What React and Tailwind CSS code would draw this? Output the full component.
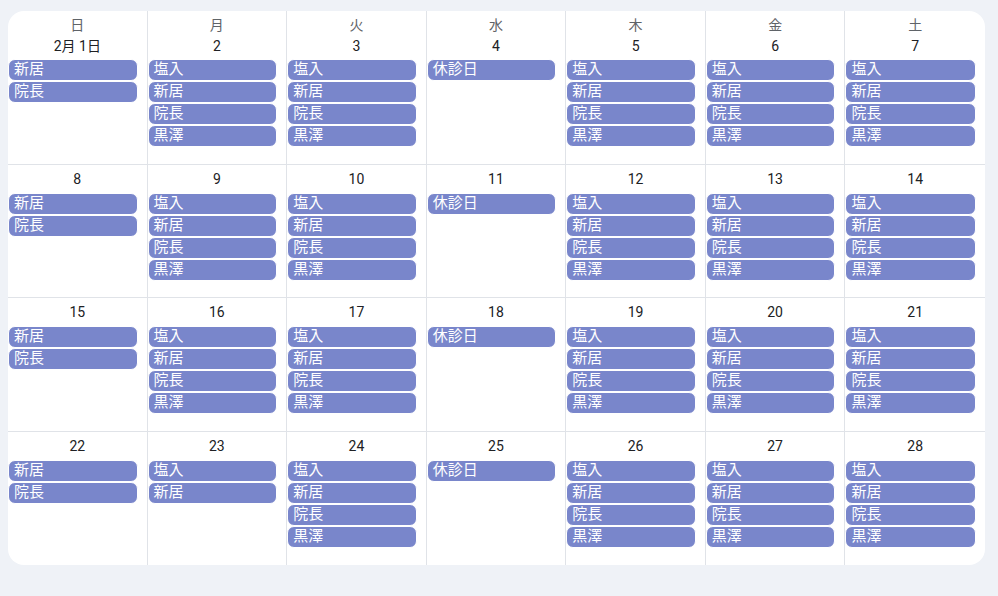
const weekdays = ["日", "月", "火", "水", "木", "金", "土"];

const full = ["塩入", "新居", "院長", "黒澤"];

function eventsFor(day) {
  const dow = (day - 1) % 7;
  if (dow === 0) return ["新居", "院長"];
  if (dow === 3) return ["休診日"];
  if (day === 23) return ["塩入", "新居"];
  return full;
}

const rowHeights = ["h-[154px]", "h-[133px]", "h-[134px]", "h-[133px]"];

export default function App() {
  const weeks = [0, 1, 2, 3].map((w) => [0, 1, 2, 3, 4, 5, 6].map((d) => w * 7 + d + 1));

  return (
    <div
      className="w-[998px] h-[596px] bg-[#eff2f7] pt-[11px] pl-[8px]"
      style={{ fontFamily: 'Roboto, "Noto Sans CJK JP", sans-serif' }}
    >
      <div className="w-[977px] h-[554px] bg-white rounded-[16px] overflow-hidden flex flex-col">
        {weeks.map((week, wi) => (
          <div key={wi} className={`grid grid-cols-7 ${rowHeights[wi]} ${wi < 3 ? "border-b border-[#e0e3e8]" : ""}`}>
            {week.map((day, di) => (
              <div key={day} className={`flex flex-col pt-[4px] ${di < 6 ? "border-r border-[#e0e3e8]" : ""}`}>
                {wi === 0 && (
                  <div className="h-[21px] leading-[21px] text-center text-[14px] text-[#5f6368]">
                    {weekdays[di]}
                  </div>
                )}
                <div className="h-[20px] leading-[20px] text-center text-[14px] text-[#202124]">
                  {day === 1 ? "2月 1日" : day}
                </div>
                <div className={`${wi === 0 ? "mt-[3px]" : "mt-[4px]"} flex flex-col mr-[9px]`}>
                  {eventsFor(day).map((ev) => (
                    <div
                      key={ev}
                      className="h-[22px] border border-white rounded-[7px] bg-[#7986cb] text-white text-[15px] leading-[19px] pl-[5px] truncate"
                    >
                      {ev}
                    </div>
                  ))}
                </div>
              </div>
            ))}
          </div>
        ))}
      </div>
    </div>
  );
}
